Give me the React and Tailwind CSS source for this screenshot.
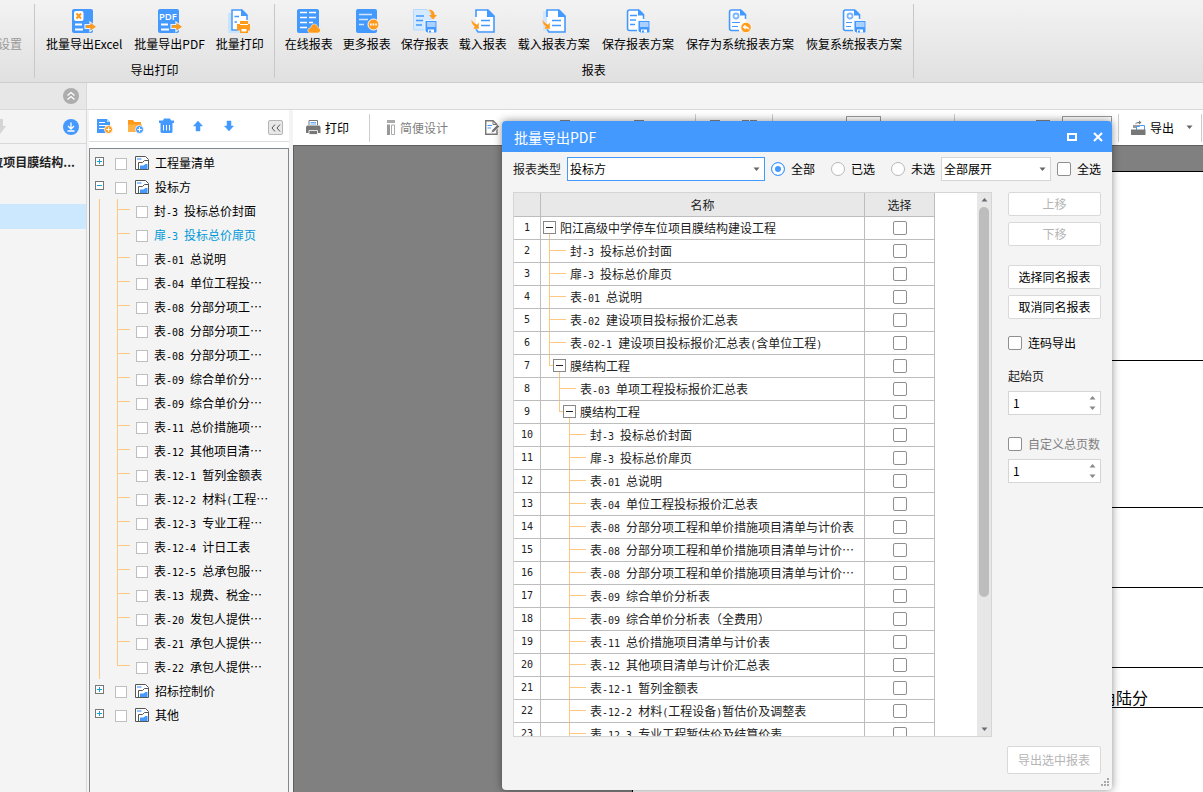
import React, { useState } from "react";
import clsx from "clsx";

const BLUE = "#4499ff";
const ORANGE = "#ff9a1a";

const sidebarChildren = [
    "封-3 投标总价封面",
    "扉-3 投标总价扉页",
    "表-01 总说明",
    "表-04 单位工程投…",
    "表-08 分部分项工…",
    "表-08 分部分项工…",
    "表-08 分部分项工…",
    "表-09 综合单价分…",
    "表-09 综合单价分…",
    "表-11 总价措施项…",
    "表-12 其他项目清…",
    "表-12-1 暂列金额表",
    "表-12-2 材料(工程…",
    "表-12-3 专业工程…",
    "表-12-4 计日工表",
    "表-12-5 总承包服…",
    "表-13 规费、税金…",
    "表-20 发包人提供…",
    "表-21 承包人提供…",
    "表-22 承包人提供…",
];

const tableRows = [
    { level: 0, node: true, name: "阳江高级中学停车位项目膜结构建设工程" },
    { level: 1, name: "封-3 投标总价封面" },
    { level: 1, name: "扉-3 投标总价扉页" },
    { level: 1, name: "表-01 总说明" },
    { level: 1, name: "表-02 建设项目投标报价汇总表" },
    { level: 1, name: "表-02-1 建设项目投标报价汇总表(含单位工程)" },
    { level: 1, node: true, name: "膜结构工程" },
    { level: 2, name: "表-03 单项工程投标报价汇总表" },
    { level: 2, node: true, name: "膜结构工程" },
    { level: 3, name: "封-3 投标总价封面" },
    { level: 3, name: "扉-3 投标总价扉页" },
    { level: 3, name: "表-01 总说明" },
    { level: 3, name: "表-04 单位工程投标报价汇总表" },
    { level: 3, name: "表-08 分部分项工程和单价措施项目清单与计价表" },
    { level: 3, name: "表-08 分部分项工程和单价措施项目清单与计价…" },
    { level: 3, name: "表-08 分部分项工程和单价措施项目清单与计价…" },
    { level: 3, name: "表-09 综合单价分析表" },
    { level: 3, name: "表-09 综合单价分析表（全费用）" },
    { level: 3, name: "表-11 总价措施项目清单与计价表" },
    { level: 3, name: "表-12 其他项目清单与计价汇总表" },
    { level: 3, name: "表-12-1 暂列金额表" },
    { level: 3, name: "表-12-2 材料(工程设备)暂估价及调整表" },
    { level: 3, name: "表-12-3 专业工程暂估价及结算价表" },
];

const leafIndent = ["pl-0", "pl-2", "pl-[18px]", "pl-7"];
const nodeIndent = ["pl-0.5", "pl-2", "pl-[18px]"];

// Half-width characters take 6px each beside 12px ideographs
const Mixed = ({ children }) =>
    children.split(/([\x20-\x7e]+)/).map((part, i) =>
        i % 2 ? (
            <span key={i} className="font-['DejaVu_Sans_Mono',monospace] text-[10px] leading-none whitespace-pre">{part}</span>
        ) : (
            part
        )
    );

const Icon = ({ size = 24, children }) => (
    <svg width={size} height={size} viewBox={`0 0 ${size} ${size}`} fill="none" aria-hidden="true" className="shrink-0">
        {children}
    </svg>
);

const Caret = ({ up, color = "#666" }) => (
    <svg width="7" height="5" viewBox="0 0 7 5" aria-hidden="true" className="shrink-0">
        <path d={up ? "M0.500 4.500 3.500 1 6.500 4.500Z" : "M0.500 0.500 3.500 4 6.500 0.500Z"} fill={color} />
    </svg>
);

const ExportArrow = () => (
    <>
        <path d="M13 15.500H18V13L24 17.700 18 22.500V19.500H13Z" fill={BLUE} stroke="#e9f3ff" strokeWidth="1.200" />
        <path d="M14 16.300H18.500V13.800L24 17.700 18.500 21.500V19H14Z" fill={ORANGE} />
    </>
);

const Floppy = () => (
    <>
        <path d="M12 11.500H24V24H14L12 22Z" fill={BLUE} stroke="#eef5ff" strokeWidth="1" />
        <path d="M14 13H22.500V18H14Z" fill="#a9d0ff" />
        <path d="M15 20.500H21V23.500H15Z" fill="#fff" />
        <path d="M16 21.500H18V23.500H16Z" fill={BLUE} />
    </>
);

const PageOutline = () => (
    <>
        <path d="M3 1H13L18 6V22H3Z" fill="#fff" />
        <path d="M13 1H3.500Q1.500 1 1.500 3V19.500Q1.500 21.500 3.500 21.500H11M13 1 17.500 5.500V10" stroke={BLUE} strokeWidth="1.500" />
        <path d="M12 0 18.500 6.500H12Z" fill={BLUE} />
    </>
);

const ExcelIcon = () => (
    <Icon>
        <rect width="21" height="24" rx="2" fill={BLUE} />
        <rect x="2" y="2" width="9.500" height="10" rx="2" fill="#fff" />
        <path d="M4.500 4.500 9 9.500M9 4.500 4.500 9.500" stroke={ORANGE} strokeWidth="2" />
        <path d="M3 15.500H10M3 20.500H11" stroke="#fff" strokeWidth="1.800" />
        <ExportArrow />
    </Icon>
);

const PdfIcon = () => (
    <Icon>
        <rect width="21" height="24" rx="2" fill={BLUE} />
        <text x="1" y="10.500" fontSize="9.500" fontWeight="600" fontFamily="Open Sans, sans-serif" fill="#fff">PDF</text>
        <path d="M3 15.500H10M3 20.500H11" stroke="#fff" strokeWidth="1.800" />
        <ExportArrow />
    </Icon>
);

const BatchPrintIcon = () => (
    <Icon>
        <path d="M0 4H4V22H12V24H0Z" fill="#c9e4ff" />
        <path d="M4 1H15L19 6V21H4Z" fill="#fff" />
        <path d="M10 21H4V1H14L19 6V11" stroke={BLUE} strokeWidth="1.500" />
        <path d="M13 0 20 7H13Z" fill={BLUE} />
        <path d="M6.500 7.500H11M6.500 13H9" stroke={BLUE} strokeWidth="1.500" />
        <path d="M12 12H20V15H22V21.500H20V24H12V21.500H9V15H12Z" fill={ORANGE} />
        <path d="M13.500 20H18.500V22.500H13.500Z" fill="#fff" />
        <path d="M12 15.500H20" stroke="#fff" />
    </Icon>
);

const OnlineIcon = () => (
    <Icon>
        <rect x="0" width="22" height="24" rx="2" fill={BLUE} />
        <path d="M3 3.500H10M12 3.500H19M3 8.500H10M12 8.500H19M3 13.500H10M12 13.500H16M3 18.500H10" stroke="#fff" strokeWidth="1.500" />
        <path d="M13 24Q10.500 23.500 10.800 21Q11.200 19 13.500 18.800Q14.500 14.800 18 15Q20.500 15.500 21 18.500Q23.500 19 23.500 21.500Q23.300 23.700 21 24Z" fill={ORANGE} stroke="#fff" strokeWidth="0.500" />
    </Icon>
);

const MoreIcon = () => (
    <Icon>
        <rect x="1" width="21" height="24" rx="2" fill={BLUE} />
        <path d="M4 5.500H17M4 10.500H13M4 15.500H9" stroke="#cfe6ff" strokeWidth="1.500" />
        <circle cx="18.500" cy="15.500" r="5.500" fill={ORANGE} stroke="#fff" />
        <path d="M15 15.500H22" stroke="#fff" strokeWidth="1.800" strokeDasharray="1.700 0.900" />
    </Icon>
);

const SaveIcon = () => (
    <Icon>
        <path d="M0.500 0.500H14L18 5V21H0.500Z" fill="#d6eaff" stroke="#b5d9ff" />
        <path d="M3 7H11M3 11.500H10M3 16H9" stroke={BLUE} strokeWidth="1.300" />
        <path d="M15.500 0.500Q22 1 21.500 6H24L20 10.500 16 6H18.500Q18.500 3 15.500 0.500Z" fill={ORANGE} />
        <Floppy />
    </Icon>
);

const LoadIcon = ({ stacked }) => (
    <Icon>
        {stacked && <path d="M1 2H5V24H17V22H1Z" fill="#cfe6ff" />}
        <path d="M5 1H17L23 7V21.500H5Z" fill="#fff" />
        <path d="M5 8V1H17L23 7V23H7L5 20" stroke={BLUE} strokeWidth="1.600" />
        <path d="M16 0 24 8H16Z" fill={BLUE} />
        <path d="M10 11.500H19M10 16.500H19" stroke={BLUE} strokeWidth="1.600" />
        <path d="M0 10.500Q0.500 15.500 3.500 17.500L2 20H8V13.500L6 15.500Q3 14 0 10.500Z" fill={ORANGE} stroke="#eee" strokeWidth="0.500" />
    </Icon>
);

const SavePlanIcon = () => (
    <Icon>
        <PageOutline />
        <path d="M4 6.500H11M4 11H10M4 15.500H9" stroke={BLUE} strokeWidth="1.300" />
        <Floppy />
    </Icon>
);

const SaveSystemIcon = () => (
    <Icon>
        <PageOutline />
        <circle cx="8" cy="7" r="2.500" stroke="#7ab6ff" strokeWidth="1.800" />
        <path d="M4 13.500H12M4 17.500H10" stroke={BLUE} strokeWidth="1.200" />
        <circle cx="18" cy="18.500" r="5.200" fill={ORANGE} stroke="#fff" strokeWidth="0.800" />
        <path d="M14.500 18 17.500 15.500V17.300Q21 17.500 21.500 21Q20 19.300 17.500 19.300V20.800Z" fill="#fff" />
    </Icon>
);

const RestoreIcon = () => (
    <Icon>
        <PageOutline />
        <circle cx="8" cy="7" r="2.500" stroke="#7ab6ff" strokeWidth="1.800" />
        <path d="M4 13.500H10M4 17.500H9" stroke={BLUE} strokeWidth="1.200" />
        <Floppy />
    </Icon>
);

const FolderDocIcon = () => (
    <Icon size={14}>
        <path d="M0.500 0.500H10.500L13.500 3.500V13.500H0.500Z" fill="#fff" stroke="#555" />
        <path d="M2 2H6.500V4H2Z" fill="#8ec3ff" />
        <path d="M3.500 13V6.500H7.500L9.500 4.500H13" stroke="#555" />
        <path d="M5 13V9.500H8.500L10.500 8H12.500V13Z" fill={BLUE} />
    </Icon>
);

const AddDocIcon = () => (
    <Icon size={16}>
        <path d="M0 1H10L13 4V15H0Z" fill={BLUE} />
        <path d="M10 1 13 4H10Z" fill="#b9dbff" />
        <path d="M2 4.500H8M2 7.500H11M2 10.500H8" stroke="#fff" />
        <circle cx="11.500" cy="11.500" r="4" fill={ORANGE} stroke="#fff" strokeWidth="0.800" />
        <path d="M11.500 9.200V13.800M9.200 11.500H13.800" stroke="#fff" strokeWidth="1.200" />
    </Icon>
);

const AddFolderIcon = () => (
    <Icon size={16}>
        <path d="M0 2H5L6.500 4H13V14H0Z" fill={ORANGE} />
        <path d="M0 6.500H14V14H0Z" fill="#ffb347" />
        <circle cx="11.500" cy="11.500" r="4" fill={BLUE} stroke="#fff" strokeWidth="0.800" />
        <path d="M11.500 9.200V13.800M9.200 11.500H13.800" stroke="#fff" strokeWidth="1.200" />
    </Icon>
);

const TrashIcon = () => (
    <Icon size={16}>
        <path d="M0 2.500H4L5 0.500H11L12 2.500H15V5H0Z" fill={BLUE} />
        <path d="M1.500 4H13.500V14L12.500 15H2.500L1.500 14Z" fill={BLUE} />
        <path d="M4.500 7V12.500M7.500 7V12.500M10.500 7V12.500" stroke="#fff" />
    </Icon>
);

const ArrowIcon = ({ down }) => (
    <Icon size={16}>
        <path d={down ? "M6 3H10V8H12.500L8 13 3.500 8H6Z" : "M6 13H10V8H12.500L8 3 3.500 8H6Z"} fill={BLUE} stroke={BLUE} strokeWidth="0.500" />
    </Icon>
);

const PrinterIcon = () => (
    <Icon size={15}>
        <path d="M3 5V0.500H11.500V5" fill="#fff" stroke="#777" />
        <path d="M4.500 2.500H10M4.500 4H10" stroke={BLUE} strokeWidth="0.800" />
        <path d="M1 5.500H13.500L14.500 7V13H0V7Z" fill="#777" />
        <path d="M3 10.500H11.500V14.500H3Z" fill="#777" stroke="#fff" strokeWidth="0.800" />
    </Icon>
);

const DesignIcon = () => (
    <Icon size={15}>
        <path d="M3 0H11V3H3Z" fill="#aaa" />
        <path d="M3 4.500H6V15H3Z" fill="#999" />
        <path d="M7.500 5H10.500V14.500H7.500Z" fill="#fff" stroke="#aaa" />
    </Icon>
);

const EditIcon = () => (
    <Icon size={15}>
        <path d="M0.700 0.700H8L12 4.500V14.300H0.700Z" fill="#fff" stroke="#777" strokeWidth="1.400" />
        <path d="M8 0.700V4.500H12" stroke="#777" />
        <path d="M2.500 5.500H7M2.500 8H6" stroke={BLUE} />
        <path d="M6 13 7 10 12.500 4.500 14.500 6.500 9 12Z" fill="#777" stroke="#fff" strokeWidth="0.600" />
    </Icon>
);

const ExportIcon = () => (
    <Icon size={15}>
        <path d="M2 8V5H12.500V8" fill="#999" />
        <path d="M5.500 10.500V6.500H8.500L9.500 5.500H13.500V10.500Z" fill="#fff" stroke={BLUE} />
        <path d="M0 9.500H14.500V15H0Z" fill="#777" />
        <path d="M4 4.500Q4.500 1.500 8 2V0.500L10.500 2.500 8 4.500V3.300Q5.500 3 4 4.500Z" fill="#777" />
    </Icon>
);

const ViewButton = ({ className }) => (
    <button type="button" aria-label="视图" className={clsx("h-4 shrink-0 border-2 border-[#888]", className)} />
);

const exportButtons = [
    { label: "批量导出Excel", icon: <ExcelIcon /> },
    { label: "批量导出PDF", icon: <PdfIcon /> },
    { label: "批量打印", icon: <BatchPrintIcon /> },
];

const reportButtons = [
    { label: "在线报表", icon: <OnlineIcon /> },
    { label: "更多报表", icon: <MoreIcon /> },
    { label: "保存报表", icon: <SaveIcon /> },
    { label: "载入报表", icon: <LoadIcon /> },
    { label: "载入报表方案", icon: <LoadIcon stacked /> },
    { label: "保存报表方案", icon: <SavePlanIcon /> },
    { label: "保存为系统报表方案", icon: <SaveSystemIcon /> },
    { label: "恢复系统报表方案", icon: <RestoreIcon /> },
];

const RibbonGroup = ({ title, buttons }) => (
    <div className="my-1 flex shrink-0 flex-col items-center border-r border-[#c8c8c8] px-2.5 pt-[5px]">
        <div className="flex gap-2.5">
            {buttons.map(({ label, icon }) => (
                <button
                    key={label}
                    type="button"
                    className={clsx("flex flex-col items-center gap-0.5 whitespace-nowrap", label.length > 4 && "px-px")}
                >
                    {icon}
                    <span className="leading-[18px]">{label}</span>
                </button>
            ))}
        </div>
        <span className="mt-2 leading-[18px]">{title}</span>
    </div>
);

const Ribbon = () => (
    <header className="flex h-[83px] shrink-0 border-b border-[#cdcdcd] bg-linear-to-b from-[#f3f3f3] to-[#e0e0e0]">
        <div className="my-1 flex w-[35px] shrink-0 items-start justify-end overflow-hidden border-r border-[#c8c8c8] pt-[31px] pr-3">
            <button type="button" disabled className="leading-[18px] whitespace-nowrap text-[#999]">设置</button>
        </div>
        <RibbonGroup title="导出打印" buttons={exportButtons} />
        <RibbonGroup title="报表" buttons={reportButtons} />
    </header>
);

const ProjectPanel = () => (
    <aside className="flex w-[87px] shrink-0 flex-col border-r border-[#d9d9d9]">
        <div className="flex h-[27px] items-center justify-end border-b border-[#d9d9d9] bg-[#e7e7e7] pr-[7px]">
            <button type="button" aria-label="收起">
                <Icon size={16}>
                    <circle cx="8" cy="8" r="8" fill="#adadad" />
                    <path d="M4.500 7.500 8 4.500 11.500 7.500M4.500 11.500 8 8.500 11.500 11.500" stroke="#fff" strokeWidth="1.300" />
                </Icon>
            </button>
        </div>
        <div className="flex h-[34px] items-center justify-between border-b border-[#d9d9d9] pr-[7px]">
            <svg width="6" height="16" viewBox="0 0 6 16" aria-hidden="true">
                <path d="M0 0H3V7H6L0 15Z" fill="#d5d5d5" />
            </svg>
            <button type="button" aria-label="下载">
                <Icon size={16}>
                    <circle cx="8" cy="8" r="8" fill={BLUE} />
                    <path d="M8 3.500V10M5 7 8 10 11 7M4.500 12H11.500" stroke="#fff" strokeWidth="1.300" />
                </Icon>
            </button>
        </div>
        <div className="flex h-9 items-center justify-end overflow-hidden pr-[11px] font-bold whitespace-nowrap text-[#222]">
            位项目膜结构...
        </div>
        <div className="mt-6 h-[25px] bg-[#cce8ff]" />
    </aside>
);

const TreeRoot = ({ label, open }) => (
    <li className="flex h-6 items-center pl-[5px]">
        <button
            type="button"
            aria-label={open ? "折叠" : "展开"}
            className="mb-[3px] flex size-[9px] shrink-0 items-center justify-center border border-[#777] bg-white"
        >
            <svg width="5" height="5" viewBox="0 0 5 5" aria-hidden="true">
                <path d={open ? "M0 2.500H5" : "M0 2.500H5M2.500 0V5"} stroke="#1a9fd6" />
            </svg>
        </button>
        <label className="ml-[11px] flex items-center">
            <input type="checkbox" className="mt-0.5 mr-2 size-3 appearance-none border border-[#bfbfbf] bg-white" />
            <FolderDocIcon />
            <span className="ml-1.5">{label}</span>
        </label>
    </li>
);

const ReportTree = () => (
    <section className="flex w-[202px] shrink-0 flex-col pl-0.5">
        <div className="flex h-[38px] shrink-0 flex-col bg-white">
            <div className="flex h-8 items-center gap-[15px] border-b border-[#dcdcdc] pr-1.5 pl-2">
                <button type="button" aria-label="新建报表"><AddDocIcon /></button>
                <button type="button" aria-label="新建文件夹"><AddFolderIcon /></button>
                <button type="button" aria-label="删除"><TrashIcon /></button>
                <button type="button" aria-label="上移"><ArrowIcon /></button>
                <button type="button" aria-label="下移"><ArrowIcon down /></button>
                <button type="button" aria-label="隐藏" className="mt-1 ml-auto flex size-[15px] items-center justify-center rounded-xs border border-[#b5b5b5] bg-[#e8e8e8]">
                    <svg width="10" height="8" viewBox="0 0 10 8" fill="none" aria-hidden="true">
                        <path d="M4 0.500 1 4 4 7.500M9 0.500 6 4 9 7.500" stroke="#555" />
                    </svg>
                </button>
            </div>
        </div>
        <ul className="min-h-0 flex-1 overflow-hidden border border-b-0 border-[#828790] pt-0.5">
            <TreeRoot label="工程量清单" />
            <TreeRoot label="投标方" open />
            {sidebarChildren.map((name, i) => (
                <li key={i} className="flex h-6 items-center">
                    <span className="ml-[9px] h-full w-[18px] shrink-0 border-l border-[#ffc880]" />
                    <span className={clsx("flex h-full w-[13px] shrink-0 flex-col", i < sidebarChildren.length - 1 && "border-l border-[#ffc880]")}>
                        <span className={clsx("h-[11px] border-b border-[#ffc880]", i === sidebarChildren.length - 1 && "border-l")} />
                    </span>
                    <label className={clsx("ml-1.5 flex items-center whitespace-nowrap", i === 1 && "text-[#0099d8]")}>
                        <input type="checkbox" className="mt-0.5 mr-1.5 size-3 appearance-none border border-[#bfbfbf] bg-white" />
                        <span><Mixed>{name}</Mixed></span>
                    </label>
                </li>
            ))}
            <TreeRoot label="招标控制价" />
            <TreeRoot label="其他" />
        </ul>
    </section>
);

const Separator = ({ className }) => <span className={clsx("h-7 w-px shrink-0 bg-[#ccc]", className)} />;

const Preview = () => (
    <main className="ml-1 flex min-w-0 flex-1 flex-col">
        <div className="flex h-[35px] shrink-0 items-center bg-white">
            <button type="button" className="ml-[13px] flex items-center gap-1 whitespace-nowrap"><PrinterIcon />打印</button>
            <Separator className="ml-5" />
            <button type="button" className="ml-3.5 flex items-center gap-px whitespace-nowrap text-[#808080]"><DesignIcon />简便设计</button>
            <button type="button" aria-label="编辑" className="ml-[37px]"><EditIcon /></button>
            <ViewButton className="ml-[60px] w-2.5" />
            <ViewButton className="ml-16 w-2.5" />
            <Separator className="ml-[51px]" />
            <ViewButton className="ml-3.5 w-2.5" />
            <ViewButton className="ml-[22px] w-[7px]" />
            <ViewButton className="ml-px w-[7px]" />
            <Separator className="ml-[15px]" />
            <input type="text" aria-label="页码" className="ml-[73px] h-6 w-[35px] shrink-0 border border-[#999]" />
            <Separator className="ml-[73px]" />
            <div className="ml-auto flex items-center">
                <button type="button" aria-label="放大" className="mr-[21px] size-3.5 rounded-full border-2 border-[#888]" />
                <button type="button" aria-label="缩小" className="mr-5 size-3.5 rounded-full border-2 border-[#888]" />
                <ViewButton className="mr-3 w-3.5" />
                <input type="text" aria-label="缩放" className="h-6 w-[50px] shrink-0 border border-[#999]" />
                <Separator className="ml-1.5" />
                <button type="button" className="ml-3 flex items-center gap-1 whitespace-nowrap"><ExportIcon />导出</button>
                <button type="button" aria-label="更多导出" className="ml-3"><Caret /></button>
                <Separator className="mr-px ml-2" />
            </div>
        </div>
        <div className="min-h-0 flex-1 overflow-hidden border-t border-l border-[#5f5f5f] bg-[#808080] pt-[25px] pl-[338px]">
            <div className="h-full border-t border-l border-black bg-white">
                <div className="h-[189px] border-b border-black" />
                <div className="h-[147px] border-b border-black" />
                <div className="h-20 border-b border-black" />
                <div className="h-20 border-b border-black" />
                <div className="flex h-10 items-end border-b border-black pl-[467px] text-base leading-5 whitespace-nowrap">角陆分</div>
            </div>
        </div>
    </main>
);

const Radio = ({ label, value, selected, onSelect }) => (
    <label className="flex items-center gap-1.5 whitespace-nowrap">
        <input
            type="radio"
            name="filter"
            value={value}
            checked={selected === value}
            onChange={() => onSelect(value)}
            className="size-3.5 appearance-none rounded-full border border-[#b8b8b8] bg-white checked:border-[#4499ff] checked:bg-[#4499ff] checked:shadow-[inset_0_0_0_3px_white]"
        />
        {label}
    </label>
);

const Check = ({ className, ...props }) => (
    <input
        type="checkbox"
        className={clsx("size-3.5 shrink-0 appearance-none rounded-xs border border-[#8f8f8f] bg-white checked:bg-[#4499ff]", className)}
        {...props}
    />
);

const Dropdown = ({ id, options, className, ...props }) => (
    <div className={clsx("relative h-6 border bg-white", className)}>
        <select id={id} className="size-full appearance-none pr-5 pl-0.5 outline-none" {...props}>
            {options.map((option) => (
                <option key={option}>{option}</option>
            ))}
        </select>
        <span className="pointer-events-none absolute inset-y-0 right-1 flex items-center"><Caret /></span>
    </div>
);

const Spinner = ({ id, label }) => {
    const [value, setValue] = useState(1);

    return (
        <div className="flex h-6 border border-[#d5d5d5] bg-white">
            <input
                id={id}
                type="text"
                aria-label={label}
                value={value}
                onChange={(event) => setValue(event.target.value)}
                className="w-full min-w-0 flex-1 pl-1 outline-none"
            />
            <div className="flex w-4 flex-col items-center justify-center gap-1.5">
                <button type="button" aria-label="增加" onClick={() => setValue(Number(value) + 1)} className="flex"><Caret up color="#888" /></button>
                <button type="button" aria-label="减少" onClick={() => setValue(Number(value) - 1)} className="flex"><Caret color="#888" /></button>
            </div>
        </div>
    );
};

const NameCell = ({ row }) => (
    <div className={clsx("flex h-[22px] items-center", row.node ? nodeIndent[row.level] : leafIndent[row.level])}>
        {row.node ? (
            <>
                {row.level > 0 && (
                    <span className="h-full w-1 shrink-0">
                        <span className="block h-[11px] border-b border-l border-[#ffc880]" />
                    </span>
                )}
                <span className="flex h-full w-[13px] shrink-0 flex-col pt-1">
                    <button type="button" aria-label="折叠" className="flex size-[13px] shrink-0 items-center justify-center border border-[#888] bg-white">
                        <span className="h-px w-[7px] bg-[#222]" />
                    </button>
                    <span className="ml-1.5 flex-1 border-l border-[#ffc880]" />
                </span>
            </>
        ) : (
            <span className="h-full w-[17px] shrink-0 border-l border-[#ffc880]">
                <span className="block h-[11px] border-b border-[#ffc880]" />
            </span>
        )}
        <span className="ml-1 whitespace-nowrap"><Mixed>{row.name}</Mixed></span>
    </div>
);

const ReportTable = () => (
    <div className="flex min-w-0 flex-1 overflow-hidden border border-[#d5d5d5] bg-white">
        <div className="min-w-0 flex-1 overflow-hidden pr-[42px]">
            <table className="w-full table-fixed border-separate border-spacing-0 text-[#222]">
                <thead>
                    <tr className="bg-[#e8e8e8]">
                        <th className="h-6 w-[27px] border-r border-b border-[#bdbdbd] p-0" />
                        <th className="border-r border-b border-[#bdbdbd] p-0 font-normal">名称</th>
                        <th className="w-[70px] border-r border-b border-[#bdbdbd] p-0 font-normal">选择</th>
                    </tr>
                </thead>
                <tbody>
                    {tableRows.map((row, i) => (
                        <tr key={i}>
                            <td className="border-r border-b border-[#bdbdbd] p-0 text-center font-['DejaVu_Sans_Mono',monospace] text-[10px]">{i + 1}</td>
                            <td className="overflow-hidden border-r border-b border-[#bdbdbd] p-0"><NameCell row={row} /></td>
                            <td className="border-r border-b border-[#bdbdbd] p-0">
                                <Check aria-label={row.name} className="mx-auto block" />
                            </td>
                        </tr>
                    ))}
                </tbody>
            </table>
        </div>
        <div className="flex w-3.5 shrink-0 flex-col items-center bg-[#e7e7e7] py-1">
            <Caret up color="#6b6b75" />
            <div className="mt-[5px] h-[390px] w-2.5 rounded-full bg-[#bdbdbd]" />
            <div className="mt-auto flex"><Caret color="#6b6b75" /></div>
        </div>
    </div>
);

const buttonClass = "h-6 rounded-xs border border-[#d9d9d9] bg-white whitespace-nowrap disabled:text-[#b5b5b5]";

const ExportDialog = () => {
    const [filter, setFilter] = useState("all");

    return (
        <div
            role="dialog"
            aria-labelledby="dialog-title"
            className="absolute top-[121px] left-[502px] flex h-[669px] w-[610px] flex-col overflow-hidden rounded-sm bg-[#f4f4f4] shadow-[0_0_8px_rgba(0,0,0,0.45)]"
        >
            <div className="flex h-[31px] shrink-0 items-center bg-[#4499ff] pr-[9px] pl-3">
                <h1 id="dialog-title" className="text-sm text-white">批量导出PDF</h1>
                <button type="button" aria-label="最大化" className="ml-auto">
                    <Icon size={10}><path d="M1 2H9V8H1Z" stroke="#fff" strokeWidth="2" /></Icon>
                </button>
                <button type="button" aria-label="关闭" className="ml-4">
                    <Icon size={10}><path d="M1 1 9 9M9 1 1 9" stroke="#fff" strokeWidth="2" /></Icon>
                </button>
            </div>
            <div className="mt-[5px] flex h-6 shrink-0 items-center pr-[11px] pl-[11px]">
                <label htmlFor="report-type" className="whitespace-nowrap text-[#222]">报表类型</label>
                <Dropdown id="report-type" options={["投标方", "招标控制价", "其他"]} className="ml-1.5 min-w-0 flex-1 border-[#4499ff]" />
                <div className="ml-1.5 flex gap-4">
                    <Radio label="全部" value="all" selected={filter} onSelect={setFilter} />
                    <Radio label="已选" value="selected" selected={filter} onSelect={setFilter} />
                    <Radio label="未选" value="unselected" selected={filter} onSelect={setFilter} />
                </div>
                <Dropdown aria-label="展开" options={["全部展开", "全部折叠"]} className="ml-1.5 w-[110px] border-[#d5d5d5]" />
                <label className="ml-1.5 flex items-center gap-1.5 whitespace-nowrap"><Check />全选</label>
            </div>
            <div className="mt-[11px] flex min-h-0 flex-1 gap-4 pr-[11px] pl-[11px]">
                <ReportTable />
                <div className="flex w-[93px] shrink-0 flex-col">
                    <button type="button" disabled className={buttonClass}>上移</button>
                    <button type="button" disabled className={clsx(buttonClass, "mt-1.5")}>下移</button>
                    <button type="button" className={clsx(buttonClass, "mt-[19px]")}>选择同名报表</button>
                    <button type="button" className={clsx(buttonClass, "mt-1.5")}>取消同名报表</button>
                    <label className="mt-4 flex items-center gap-1.5 whitespace-nowrap"><Check />连码导出</label>
                    <label htmlFor="start-page" className="mt-[17px] mb-[7px] text-[#222]">起始页</label>
                    <Spinner id="start-page" />
                    <label className="mt-[21px] mb-[7px] flex items-center gap-1.5 whitespace-nowrap text-[#808080]"><Check />自定义总页数</label>
                    <Spinner id="total-pages" label="总页数" />
                </div>
            </div>
            <div className="mt-[9px] flex shrink-0 justify-end pr-[11px]">
                <button type="button" disabled className="h-7 w-[94px] rounded-xs border border-[#d9d9d9] bg-white whitespace-nowrap text-[#b5b5b5]">导出选中报表</button>
            </div>
            <div className="flex h-4 shrink-0 items-center justify-end pr-[3px]">
                <Icon size={8}>
                    <path d="M6 0H8V2H6ZM3 3H5V5H3ZM6 3H8V5H6ZM0 6H2V8H0ZM3 6H5V8H3ZM6 6H8V8H6Z" fill="#aaa" />
                </Icon>
            </div>
        </div>
    );
};

export const App = () => (
    <div className="relative flex h-screen flex-col overflow-hidden bg-[#f4f4f4] font-['Noto_Sans_CJK_SC',sans-serif] text-xs text-black" lang="zh-CN">
        <Ribbon />
        <div className="flex min-h-0 flex-1">
            <ProjectPanel />
            <div className="flex min-w-0 flex-1 flex-col">
                <div className="h-[27px] shrink-0 border-b border-[#d9d9d9]" />
                <div className="flex min-h-0 flex-1">
                    <ReportTree />
                    <Preview />
                </div>
            </div>
        </div>
        <ExportDialog />
    </div>
);

export default App;
